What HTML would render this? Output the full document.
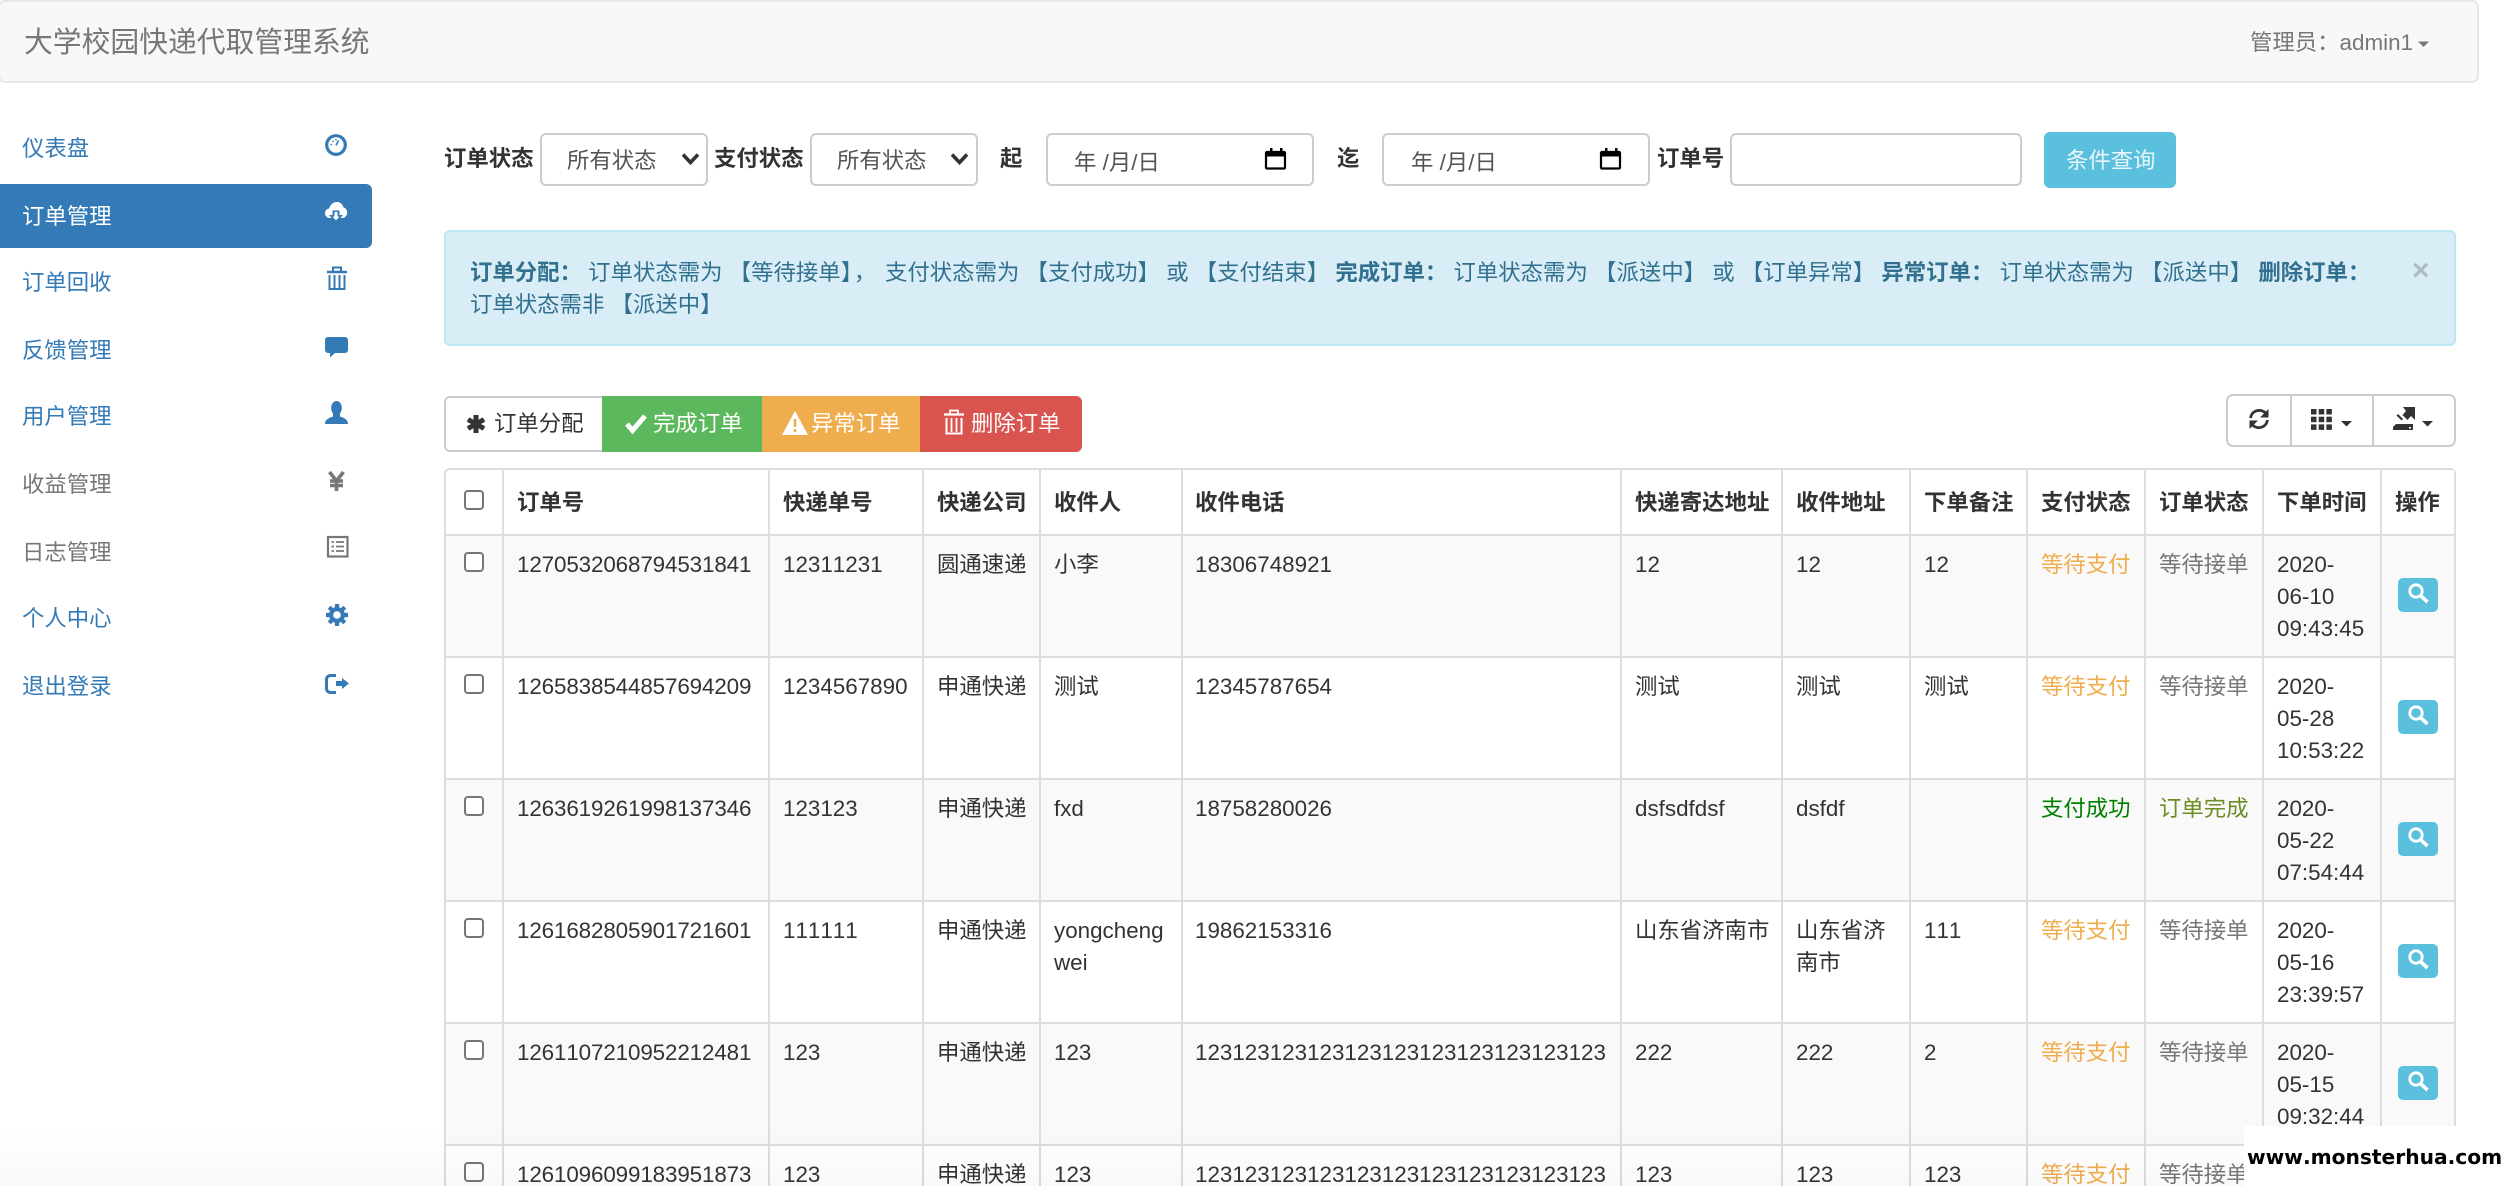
<!DOCTYPE html>
<html lang="zh">
<head>
<meta charset="utf-8">
<title>大学校园快递代取管理系统</title>
<style>
*{box-sizing:border-box}
html,body{margin:0;padding:0;width:2504px;height:1186px;overflow:hidden;background:#fff}
body{position:relative;font-family:"Liberation Sans","Noto Sans CJK SC",sans-serif;font-size:22.4px;color:#333;font-kerning:none}
.t{position:absolute;white-space:nowrap;line-height:32px;font-size:22.4px}
.l{color:#337ab7}.g{color:#777}
.navbar{position:absolute;left:-2px;top:0;width:2481px;height:83px;background:#f8f8f8;border:2px solid #e7e7e7;border-radius:7px}
.active{position:absolute;left:0;top:184px;width:372px;height:64px;background:#337ab7;border-radius:0 6px 6px 0}
.box{position:absolute;background:#fff;border:2px solid #ccc;border-radius:6px;height:53px;top:133px}
.alert{position:absolute;left:444px;top:230px;width:2012px;height:116px;background:#d9edf7;border:2px solid #bce8f1;border-radius:6px}
.alert-t{position:absolute;left:470px;top:257px;line-height:32px;color:#31708f;white-space:nowrap;font-size:22.4px}
.q{position:absolute;left:2044px;top:132px;width:132px;height:56px;background:#5bc0de;border-radius:6px}
.bt{position:absolute;top:396px;height:56px}
.wrap{position:absolute;left:444px;top:468px;border-left:2px solid #ddd;border-top:2px solid #ddd;border-top-left-radius:6px;border-top-right-radius:6px;width:2012px;height:718px;overflow:hidden}
table{border-collapse:separate;border-spacing:0;table-layout:fixed;width:2010px}
th,td{border-right:2px solid #ddd;border-bottom:2px solid #ddd;padding:13px 13px 0;text-align:left;white-space:nowrap;line-height:32px;font-size:22.4px;position:relative;overflow:visible;color:#333}
th{height:66px;padding:2px 13px 0;vertical-align:middle;font-weight:bold;background:#fff}
td{height:122px;vertical-align:top;background:#fff}
td:nth-child(2){letter-spacing:-.12px}
tr.last td{height:40px;padding-top:18px;line-height:22px;border-bottom:0}
th:nth-child(6),td:nth-child(6){padding-left:12px}
tr.s td{background:#f9f9f9}
.cb{position:absolute;left:18px;top:16px;width:20px;height:20px;border:2px solid #767676;border-radius:4px;background:#fff}
th .cb{top:20px}
.y{color:#f0ad4e!important}.gy{color:#777!important}.gn{color:#008000!important}.ol{color:#6b8e23!important}
.sb{position:absolute;left:2398px;width:40px;height:34px;background:#5bc0de;border-radius:5px}
.tb{position:absolute;left:2226px;top:394px;width:230px;height:53px;border:2px solid #ccc;border-radius:7px;background:#fff}
.tb i{position:absolute;top:0;bottom:0;width:2px;background:#ccc}
.wm{position:absolute;left:2244px;top:1126px;width:260px;height:60px;background:#fff}
.wmt{position:absolute;left:2247px;top:1142px;line-height:30px;font-family:"DejaVu Sans",sans-serif;font-weight:bold;font-size:20.2px;color:#000;white-space:nowrap}
.shade{position:absolute;left:0;top:1125px;width:2504px;height:61px;background:linear-gradient(to bottom,rgba(0,0,0,0),rgba(0,0,0,.025))}
svg.ov{position:absolute;left:0;top:0;pointer-events:none}
</style>
</head>
<body>
<div class="navbar"></div>
<div class="t" style="left:24px;top:26px;font-size:28.8px;line-height:34px;color:#777">大学校园快递代取管理系统</div>
<div class="t g" style="left:2250px;top:27px">管理员&#xFF1A;admin1</div>

<div class="active"></div>
<div class="t l" style="left:22px;top:133px">仪表盘</div>
<div class="t" style="left:22px;top:201px;color:#fff">订单管理</div>
<div class="t l" style="left:22px;top:267px">订单回收</div>
<div class="t l" style="left:22px;top:335px">反馈管理</div>
<div class="t l" style="left:22px;top:401px">用户管理</div>
<div class="t g" style="left:22px;top:469px">收益管理</div>
<div class="t g" style="left:22px;top:537px">日志管理</div>
<div class="t l" style="left:22px;top:603px">个人中心</div>
<div class="t l" style="left:22px;top:671px">退出登录</div>

<b class="t" style="left:444px;top:143px">订单状态</b>
<div class="box" style="left:540px;width:168px"></div>
<div class="t" style="left:567px;top:145px;color:#555">所有状态</div>
<b class="t" style="left:714px;top:143px">支付状态</b>
<div class="box" style="left:810px;width:168px"></div>
<div class="t" style="left:837px;top:145px;color:#555">所有状态</div>
<b class="t" style="left:1000px;top:143px">起</b>
<div class="box" style="left:1046px;width:268px"></div>
<div class="t" style="left:1074px;top:147px;color:#555">年 /月/日</div>
<b class="t" style="left:1337px;top:143px">迄</b>
<div class="box" style="left:1382px;width:268px"></div>
<div class="t" style="left:1411px;top:147px;color:#555">年 /月/日</div>
<b class="t" style="left:1657px;top:143px">订单号</b>
<div class="box" style="left:1730px;width:292px"></div>
<div class="q"></div>
<div class="t" style="left:2066px;top:145px;color:#e8f6fb">条件查询</div>

<div class="alert"></div>
<div class="alert-t"><b>订单分配&#xFF1A;</b> 订单状态需为 【等待接单】<span style="margin:0 2.5px 0 2px">&#xFF0C;</span> 支付状态需为 【支付成功】 或 【支付结束】 <b>完成订单&#xFF1A;</b> 订单状态需为 【派送中】 或 【订单异常】 <b>异常订单&#xFF1A;</b> 订单状态需为 【派送中】 <b>删除订单&#xFF1A;</b><br>订单状态需非 【派送中】</div>
<div class="t" style="left:2412px;top:255px;font-size:30px;font-weight:bold;color:#000;opacity:.2">×</div>

<div class="bt" style="left:444px;width:159px;background:#fff;border:2px solid #ccc;border-right:0;border-radius:6px 0 0 6px"></div>
<div class="bt" style="left:602px;width:160px;background:#5cb85c"></div>
<div class="bt" style="left:762px;width:158px;background:#f0ad4e"></div>
<div class="bt" style="left:920px;width:162px;background:#d9534f;border-radius:0 6px 6px 0"></div>
<div class="t" style="left:494px;top:408px">订单分配</div>
<div class="t" style="left:653px;top:408px;color:#fff">完成订单</div>
<div class="t" style="left:811px;top:408px;color:#fff">异常订单</div>
<div class="t" style="left:971px;top:408px;color:#fff">删除订单</div>

<div class="tb"><i style="left:62px"></i><i style="left:144px"></i></div>

<div class="wrap">
<table>
<colgroup><col style="width:58px"><col style="width:266px"><col style="width:154px"><col style="width:117px"><col style="width:142px"><col style="width:439px"><col style="width:161px"><col style="width:128px"><col style="width:117px"><col style="width:118px"><col style="width:118px"><col style="width:118px"><col style="width:74px"></colgroup>
<thead><tr><th><span class="cb"></span></th><th>订单号</th><th>快递单号</th><th>快递公司</th><th>收件人</th><th>收件电话</th><th>快递寄达地址</th><th>收件地址</th><th>下单备注</th><th>支付状态</th><th>订单状态</th><th>下单时间</th><th>操作</th></tr></thead>
<tbody>
<tr class="s"><td><span class="cb"></span></td><td>1270532068794531841</td><td>12311231</td><td>圆通速递</td><td>小李</td><td>18306748921</td><td>12</td><td>12</td><td>12</td><td class="y">等待支付</td><td class="gy">等待接单</td><td>2020-<br>06-10<br>09:43:45</td><td></td></tr>
<tr><td><span class="cb"></span></td><td>1265838544857694209</td><td>1234567890</td><td>申通快递</td><td>测试</td><td>12345787654</td><td>测试</td><td>测试</td><td>测试</td><td class="y">等待支付</td><td class="gy">等待接单</td><td>2020-<br>05-28<br>10:53:22</td><td></td></tr>
<tr class="s"><td><span class="cb"></span></td><td>1263619261998137346</td><td>123123</td><td>申通快递</td><td>fxd</td><td>18758280026</td><td>dsfsdfdsf</td><td>dsfdf</td><td></td><td class="gn">支付成功</td><td class="ol">订单完成</td><td>2020-<br>05-22<br>07:54:44</td><td></td></tr>
<tr><td><span class="cb"></span></td><td>1261682805901721601</td><td>111111</td><td>申通快递</td><td>yongcheng<br>wei</td><td>19862153316</td><td>山东省济南市</td><td>山东省济<br>南市</td><td>111</td><td class="y">等待支付</td><td class="gy">等待接单</td><td>2020-<br>05-16<br>23:39:57</td><td></td></tr>
<tr class="s"><td><span class="cb"></span></td><td>1261107210952212481</td><td>123</td><td>申通快递</td><td>123</td><td>123123123123123123123123123123123</td><td>222</td><td>222</td><td>2</td><td class="y">等待支付</td><td class="gy">等待接单</td><td>2020-<br>05-15<br>09:32:44</td><td></td></tr>
<tr class="last"><td><span class="cb"></span></td><td>1261096099183951873</td><td>123</td><td>申通快递</td><td>123</td><td>123123123123123123123123123123123</td><td>123</td><td>123</td><td>123</td><td class="y">等待支付</td><td class="gy">等待接单</td><td></td><td></td></tr>
</tbody>
</table>
</div>

<div class="sb" style="top:578px"></div>
<div class="sb" style="top:700px"></div>
<div class="sb" style="top:822px"></div>
<div class="sb" style="top:944px"></div>
<div class="sb" style="top:1066px"></div>

<svg class="ov" width="2504" height="1186" viewBox="0 0 2504 1186" xmlns="http://www.w3.org/2000/svg">
<defs>
<g id="srch" fill="none" stroke="#fff"><circle cx="2416" cy="591" r="6.2" stroke-width="2.8"/><path d="M2421 596l6.5 6" stroke-width="3.6"/></g>
<g id="cal"><path d="M5 0h2.5v4H5zM15 0h2.5v4H15z" fill="#000"/><rect x="1" y="4" width="19" height="16.5" rx="1" fill="none" stroke="#000" stroke-width="2.2"/><rect x="1" y="4" width="19" height="4.5" fill="#000"/></g>
</defs>

<!-- navbar caret -->
<path d="M2418 41.500h11l-5.500 5.500z" fill="#777"/>

<!-- dashboard -->
<g transform="translate(324,133)" fill="none" stroke="#337ab7">
<circle cx="12" cy="12" r="9.300" stroke-width="3.200"/>
<path d="M12 12.500l2.500-5" stroke-width="1.600"/>
<path d="M6.500 11.500h1.500M8.500 8l1 1M12 6v1.500" stroke-width="1.400"/>
</g>
<!-- cloud download -->
<g transform="translate(324,200)">
<path d="M6 18C3 18 1 15.800 1 13.200c0-2.500 1.800-4.500 4.200-4.700C6 5 9 2 12.800 2c3.400 0 6 2.300 6.600 5.400 2.300.5 3.800 2.700 3.800 5.200 0 3-2.200 5.400-5 5.400z" fill="#fff"/>
<path d="M8.500 10.500h7v4.500h3.500l-7 8-7-8h3.500z" fill="#337ab7"/>
<path d="M10.500 12h3v4.500h2l-3.500 4-3.500-4h2z" fill="#fff"/>
</g>
<!-- trash -->
<g transform="translate(325,265)" fill="none" stroke="#337ab7">
<path d="M2 7h20" stroke-width="2.400"/>
<path d="M8 6V2.500h8V6" stroke-width="2"/>
<path d="M4.500 10v14h15V10" stroke-width="2"/>
<path d="M9.500 10v13M14.500 10v13" stroke-width="2"/>
</g>
<!-- comment -->
<path transform="translate(325,337)" d="M3 0h17a3 3 0 0 1 3 3v10a3 3 0 0 1-3 3H10l-5 4.500V16H3a3 3 0 0 1-3-3V3a3 3 0 0 1 3-3z" fill="#337ab7"/>
<!-- user -->
<g transform="translate(325,401)" fill="#337ab7"><ellipse cx="11.500" cy="7" rx="5.300" ry="7"/><path d="M0 23c0-4 3-6 8-7.500v-4h7v4c5 1.500 8 3.500 8 7.500z"/></g>
<!-- yen -->
<g transform="translate(328,471)" fill="none" stroke="#777" stroke-width="3.600"><path d="M1.500 1l7 9 7-9"/><path d="M2 10h13M2 14.500h13"/><path d="M8.500 9.500V20"/></g>
<!-- list-alt -->
<g transform="translate(327,536)" fill="none" stroke="#777"><rect x="1" y="1" width="19.500" height="19.500" stroke-width="2.200"/><path d="M4.500 6h2.500M9 6h8M4.500 10.500h2.500M9 10.500h8M4.500 15h2.500M9 15h8" stroke-width="1.800"/></g>
<!-- cog -->
<g transform="translate(326,604)">
<path d="M11 0v22M0 11h22M3.200 3.200l15.600 15.600M18.800 3.200L3.200 18.800" stroke="#337ab7" stroke-width="4.200"/>
<circle cx="11" cy="11" r="8" fill="#337ab7"/><circle cx="11" cy="11" r="3.800" fill="#fff"/>
</g>
<!-- logout -->
<g transform="translate(325,673)"><path d="M11 2.500H5.500a4 4 0 0 0-4 4v9a4 4 0 0 0 4 4H11" fill="none" stroke="#337ab7" stroke-width="3"/><path d="M11 8h6V5l7 5.500-7 5.500v-3h-6z" fill="#337ab7"/></g>

<!-- select chevrons -->
<path d="M683 154.500l7.500 8 7.500-8" fill="none" stroke="#333" stroke-width="3.600"/>
<path d="M952 154.500l7.500 8 7.500-8" fill="none" stroke="#333" stroke-width="3.600"/>
<!-- calendars -->
<use href="#cal" transform="translate(1265,148)"/>
<use href="#cal" transform="translate(1600,148)"/>

<!-- toolbar left icons -->
<path d="M476 415v18M468 419.500l16 9M484 419.500l-16 9" stroke="#333" stroke-width="5" fill="none"/>
<path d="M627 424l5.500 6.500L645 416" fill="none" stroke="#fff" stroke-width="5"/>
<path d="M795 411l13 24h-26z" fill="#fff"/><path d="M795 419v8M795 429v3" stroke="#f0ad4e" stroke-width="2.600"/>
<g fill="none" stroke="#fff"><path d="M944 414.500h20" stroke-width="2.200"/><path d="M950 414v-3.500h8v3.500" stroke-width="1.800"/><path d="M946.500 418v15.500h15V418" stroke-width="2"/><path d="M951.500 418v14M956.500 418v14" stroke-width="1.800"/></g>

<!-- right toolbar -->
<g transform="translate(2248,408)">
<path d="M2.500 10a8.800 8.800 0 0 1 15-5" fill="none" stroke="#333" stroke-width="2.800"/>
<path d="M20.500 1v8.500H12z" fill="#333"/>
<path d="M19.500 12a8.800 8.800 0 0 1-15 5" fill="none" stroke="#333" stroke-width="2.800"/>
<path d="M1.500 21v-8.500H10z" fill="#333"/>
</g>
<g fill="#333">
<rect x="2311" y="409" width="5.500" height="5.500"/><rect x="2318.700" y="409" width="5.500" height="5.500"/><rect x="2326.400" y="409" width="5.500" height="5.500"/>
<rect x="2311" y="416.700" width="5.500" height="5.500"/><rect x="2318.700" y="416.700" width="5.500" height="5.500"/><rect x="2326.400" y="416.700" width="5.500" height="5.500"/>
<rect x="2311" y="424.400" width="5.500" height="5.500"/><rect x="2318.700" y="424.400" width="5.500" height="5.500"/><rect x="2326.400" y="424.400" width="5.500" height="5.500"/>
<path d="M2341 421h11l-5.500 5.500z"/>
<path d="M2422 421h11l-5.500 5.500z"/>
<path d="M2393 430v-3l3-3h17v6z"/>
<path d="M2403 407h12v13l-4-4-3.500 4-5-5 3.500-4z"/>
<path d="M2398 414l5 5-1.500 1.500-5-5z"/>
</g>
<rect x="2409" y="427" width="2" height="1.500" fill="#fff"/>

<!-- search buttons -->
<use href="#srch"/>
<use href="#srch" transform="translate(0,122)"/>
<use href="#srch" transform="translate(0,244)"/>
<use href="#srch" transform="translate(0,366)"/>
<use href="#srch" transform="translate(0,488)"/>
</svg>

<div class="shade"></div>
<div class="wm"></div>
<div class="wmt">www.monsterhua.com</div>
</body>
</html>
